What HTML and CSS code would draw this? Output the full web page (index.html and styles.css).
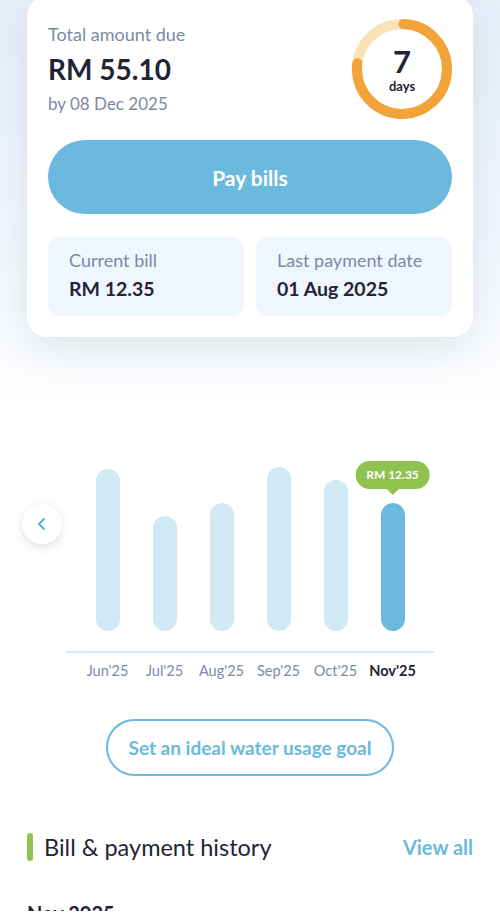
FILE: index.html
```html
<!DOCTYPE html>
<html>
<head>
    <meta charset="utf-8" />
    <meta name="viewport" content="width=device-width, initial-scale=1.0">
    <title>Bills</title>
    <link rel="stylesheet" href="styles.css">
</head>
<body>
    <div class="page">
        <div class="due-card">
            <div class="due-top">
                <div class="due-info">
                    <p class="due-label">Total amount due</p>
                    <p class="due-amount">RM 55.10</p>
                    <p class="due-date">by 08 Dec 2025</p>
                </div>
                <div class="ring">
                    <svg width="100" height="100" viewBox="0 0 100 100">
                        <circle cx="50" cy="50" r="45" fill="none" stroke="#fae1b6" stroke-width="10" />
                        <circle cx="50" cy="50" r="45" fill="none" stroke="#f2a33a" stroke-width="10"
                                stroke-dasharray="216 300" stroke-linecap="round" transform="rotate(-88 50 50)" />
                    </svg>
                    <div class="ring-text">
                        <span class="ring-num">7</span>
                        <span class="ring-unit">days</span>
                    </div>
                </div>
            </div>
            <button class="pay-btn">Pay bills</button>
            <div class="info-row">
                <div class="info-box">
                    <p class="info-label">Current bill</p>
                    <p class="info-value">RM 12.35</p>
                </div>
                <div class="info-box">
                    <p class="info-label">Last payment date</p>
                    <p class="info-value">01 Aug 2025</p>
                </div>
            </div>
        </div>

        <div class="chart">
            <button class="chart-back">
                <svg width="14" height="14" viewBox="0 0 14 14">
                    <path d="M9 2 L4 7 L9 12" fill="none" stroke="#5fb1de" stroke-width="2" stroke-linecap="round" stroke-linejoin="round" />
                </svg>
            </button>
            <div class="bars">
                <div class="bar-col"><div class="bar" style="height:162px"></div></div>
                <div class="bar-col"><div class="bar" style="height:115px"></div></div>
                <div class="bar-col"><div class="bar" style="height:128px"></div></div>
                <div class="bar-col"><div class="bar" style="height:164px"></div></div>
                <div class="bar-col"><div class="bar" style="height:151px"></div></div>
                <div class="bar-col">
                    <div class="tip">RM 12.35</div>
                    <div class="bar active" style="height:128px"></div>
                </div>
            </div>
            <div class="axis"></div>
            <div class="months">
                <span>Jun'25</span>
                <span>Jul'25</span>
                <span>Aug'25</span>
                <span>Sep'25</span>
                <span>Oct'25</span>
                <span class="current">Nov'25</span>
            </div>
        </div>

        <div class="goal-wrap">
            <button class="goal-btn">Set an ideal water usage goal</button>
        </div>

        <div class="section-head">
            <h2 class="section-title">Bill &amp; payment history</h2>
            <a class="view-all">View all</a>
        </div>
        <h3 class="month-title">Nov 2025</h3>
    </div>
</body>
</html>
```

FILE: styles.css
```css
body {
    margin: 0;
    padding: 0;
    font-family: Lato, "Open Sans", sans-serif;
    color: #1f2535;
    background: #fff linear-gradient(#e6eef8 0, #f3f7fc 260px, #fff 420px) no-repeat;
    overflow: hidden;
}

p, h2, h3 {
    margin: 0;
}

button {
    font-family: inherit;
    cursor: pointer;
}

.page {
    padding: 0 27px;
    height: 915px;
}

.due-card {
    margin-top: -4px;
    background: #fff;
    border-radius: 20px;
    padding: 27px 21px 21px;
    box-shadow: 0 14px 40px rgba(60, 80, 120, 0.12);
}

.due-top {
    display: flex;
    justify-content: space-between;
    align-items: flex-start;
}

.due-label {
    font-size: 18px;
    line-height: 22px;
    color: #7c89a5;
}

.due-amount {
    font-size: 28px;
    font-weight: 700;
    line-height: 34px;
    margin-top: 7px;
}

.due-date {
    font-size: 17px;
    line-height: 22px;
    color: #7c89a5;
    margin-top: 7px;
}

.ring {
    position: relative;
    width: 100px;
    height: 100px;
    margin-top: -4px;
}

.ring-text {
    position: absolute;
    inset: 0;
    display: flex;
    flex-direction: column;
    align-items: center;
    justify-content: center;
}

.ring-num {
    font-size: 31px;
    font-weight: 700;
    line-height: 30px;
}

.ring-unit {
    font-size: 13px;
    font-weight: 700;
    line-height: 14px;
    margin-top: 3px;
}

.pay-btn {
    display: block;
    width: 100%;
    height: 74px;
    margin-top: 21px;
    border: none;
    border-radius: 37px;
    background: #6cb9e0;
    color: #fff;
    font-size: 21px;
    font-weight: 700;
}

.info-row {
    display: flex;
    gap: 12px;
    margin-top: 23px;
}

.info-box {
    flex: 1;
    background: #f0f6fd;
    border-radius: 12px;
    padding: 12px 21px 15px;
}

.info-label {
    font-size: 18px;
    line-height: 22px;
    color: #7c89a5;
}

.info-value {
    font-size: 19.5px;
    font-weight: 700;
    line-height: 24px;
    margin-top: 6px;
}

.chart {
    position: relative;
    margin: 130px 39px 0;
}

.chart-back {
    position: absolute;
    left: -44px;
    top: 37px;
    width: 40px;
    height: 40px;
    border: none;
    border-radius: 50%;
    background: #fff;
    box-shadow: 0 3px 10px rgba(40, 60, 90, 0.16);
    display: flex;
    align-items: center;
    justify-content: center;
}

.bars {
    display: flex;
    align-items: flex-end;
    height: 164px;
    padding: 0 13px;
}

.bar-col {
    flex: 1;
    position: relative;
    display: flex;
    justify-content: center;
}

.bar {
    width: 24px;
    border-radius: 12px;
    background: #d1e8f5;
}

.bar.active {
    background: #6cb9e0;
}

.tip {
    position: absolute;
    bottom: 100%;
    left: 50%;
    transform: translate(-50%, -14px);
    background: #8fc24f;
    color: #fff;
    font-size: 12px;
    font-weight: 700;
    line-height: 28px;
    padding: 0 11px;
    border-radius: 14px;
    white-space: nowrap;
}

.tip::after {
    content: "";
    position: absolute;
    left: 50%;
    top: 100%;
    margin-left: -6px;
    border: 6px solid transparent;
    border-top: 6px solid #8fc24f;
    border-bottom: none;
}

.axis {
    height: 2px;
    background: #dde8f4;
    margin-top: 20px;
}

.months {
    display: flex;
    padding: 0 13px;
    margin-top: 8px;
}

.months span {
    flex: 1;
    text-align: center;
    font-size: 14.5px;
    line-height: 20px;
    color: #7c89a5;
}

.months .current {
    color: #1f2535;
    font-weight: 700;
}

.goal-wrap {
    display: flex;
    justify-content: center;
    margin-top: 38px;
}

.goal-btn {
    height: 57px;
    padding: 0 20px;
    border: 2px solid #6cb9e0;
    border-radius: 29px;
    background: #fff;
    color: #6cb9e0;
    font-size: 19px;
    font-weight: 700;
}

.section-head {
    display: flex;
    align-items: center;
    justify-content: space-between;
    margin-top: 56px;
}

.section-title {
    font-size: 23.5px;
    font-weight: 400;
    line-height: 30px;
    display: flex;
    align-items: center;
}

.section-title::before {
    content: "";
    width: 6px;
    height: 28px;
    border-radius: 3px;
    background: #8fc24f;
    margin-right: 11px;
}

.view-all {
    font-size: 20px;
    font-weight: 700;
    color: #6cb9e0;
}

.month-title {
    font-size: 20px;
    font-weight: 700;
    margin-top: 39px;
}
```
